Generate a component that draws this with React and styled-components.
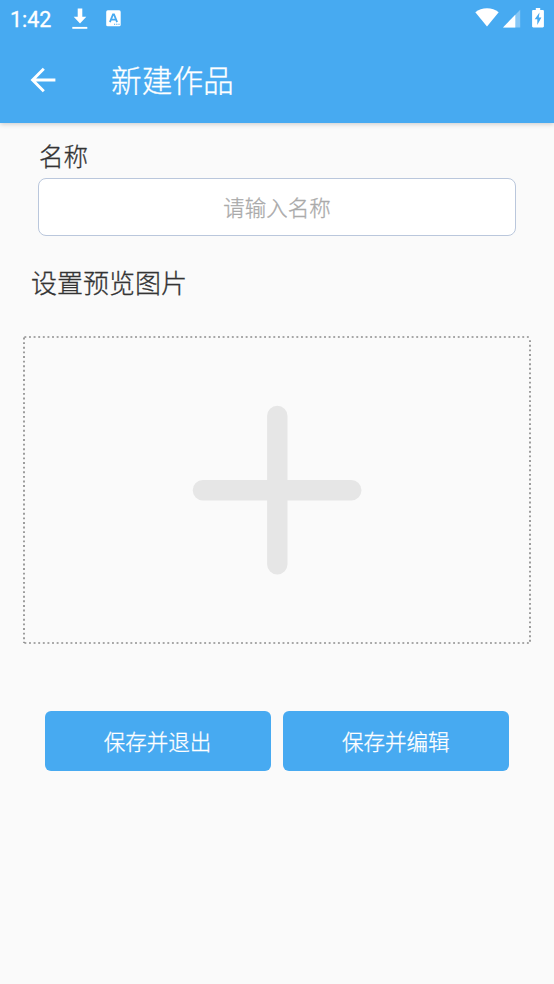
import styled, { createGlobalStyle } from "styled-components";

function App() {
    return (
        <>
            <GlobalStyle />
            <Screen>
                <Header>
                    <StatusBar>
                        <Time>1:42</Time>
                        <DownloadIcon />
                        <InputIcon />
                        <Spacer />
                        <WifiIcon />
                        <SignalIcon />
                        <BatteryIcon />
                    </StatusBar>
                    <Toolbar>
                        <BackButton aria-label="返回">
                            <BackIcon />
                        </BackButton>
                        <Title>新建作品</Title>
                    </Toolbar>
                </Header>
                <Content>
                    <NameLabel htmlFor="name">名称</NameLabel>
                    <NameInput id="name" placeholder="请输入名称" />
                    <PreviewLabel>设置预览图片</PreviewLabel>
                    <PreviewBox>
                        <DottedOutline>
                            <path d="M1.4 1H508M1.4 307H508M1 1.6V307M507 4.2V307" />
                        </DottedOutline>
                        <PlusIcon />
                    </PreviewBox>
                    <Actions>
                        <Button>保存并退出</Button>
                        <Button>保存并编辑</Button>
                    </Actions>
                </Content>
            </Screen>
        </>
    );
}

function DownloadIcon() {
    return (
        <svg width="16" height="22" viewBox="0 0 16 22" fill="#fff">
            <path d="M5.7 0.5h4.6v8.3h4L8 15.4 1.7 8.8h4z" />
            <path d="M0.3 18.9h15v1.9h-15z" />
        </svg>
    );
}

function InputIcon() {
    return (
        <svg width="15" height="17" viewBox="0 0 15 17">
            <rect x="0.2" y="0.3" width="14.5" height="16" rx="1.6" fill="#fff" />
            <path
                d="M3.9 12.1 7 4.4h1l3.1 7.7M5 9.7h5"
                fill="none"
                stroke="#47aaf1"
                strokeWidth="1.8"
            />
            <path d="M8 13.7h1.2v1.1H8zM10.2 13.7h1.2v1.1h-1.2zM12.4 13.7h1.2v1.1h-1.2z" fill="#47aaf1" />
        </svg>
    );
}

function WifiIcon() {
    return (
        <svg width="24" height="19" viewBox="0 0 24 19" fill="#fff">
            <path d="M12 18.5 0.3 4.2C3.5 1.7 7.5 0.3 12 0.3s8.5 1.4 11.7 3.9z" />
        </svg>
    );
}

function SignalIcon() {
    return (
        <svg width="18" height="19" viewBox="0 0 18 19" fill="#fff">
            <path d="M0 18.4 17.2 0.8v17.6z" opacity="0.35" />
            <path d="M0 18.4 12.3 5.8v12.6z" />
        </svg>
    );
}

function BatteryIcon() {
    return (
        <svg width="12" height="20" viewBox="0 0 12 20">
            <path
                d="M3.8 0h4.4v1.9h2.5c.7 0 1.2.5 1.2 1.2v15.2c0 .7-.5 1.2-1.2 1.2H1.3c-.7 0-1.2-.5-1.2-1.2V3.1c0-.7.5-1.2 1.2-1.2h2.5z"
                fill="#fff"
            />
            <path d="M7.5 4.6 2.7 11.3h2.6v5.8L9.4 9.5H6.8z" fill="#47aaf1" />
        </svg>
    );
}

function BackIcon() {
    return (
        <svg width="26" height="26" viewBox="0 0 26 26" fill="none" stroke="#fff" strokeWidth="2.9">
            <path d="M25.4 13H3M13.8 1.8 2.6 13l11.2 11.2" />
        </svg>
    );
}

function PlusIcon() {
    return (
        <svg width="170" height="170" viewBox="0 0 170 170" stroke="#e6e6e6" strokeWidth="20.4" strokeLinecap="round">
            <path d="M85.3 10.9v148.4M10.9 85.3h148.4" fill="none" />
        </svg>
    );
}

const GlobalStyle = createGlobalStyle`
    * {
        box-sizing: border-box;
    }
    body {
        margin: 0;
        background: #fafafa;
        font-family: Roboto, "Noto Sans CJK SC", sans-serif;
        font-weight: 300;
        -webkit-text-stroke: 0.3px currentColor;
    }
    svg {
        display: block;
        flex: none;
    }
    button,
    input {
        font-family: inherit;
        font-weight: inherit;
    }
`;

const Screen = styled.div`
    display: flex;
    flex-direction: column;
    height: 984px;
    overflow: hidden;
    background: #fafafa;
`;

const Header = styled.header`
    height: 123px;
    background: #47aaf1;
    box-shadow: 0 1px 5px rgba(0, 0, 0, 0.2);
`;

const StatusBar = styled.div`
    display: flex;
    align-items: flex-start;
    height: 37px;
    padding: 8px 10px 0;
    svg:nth-of-type(2) {
        margin: 2px 0 0 18px;
    }
    svg:nth-of-type(4) {
        margin: 1px 11px 0 4px;
    }
`;

const Time = styled.span`
    width: 62px;
    font-size: 21.5px;
    font-weight: 400;
    line-height: 24px;
    color: #fff;
`;

const Spacer = styled.div`
    flex: 1;
`;

const Toolbar = styled.div`
    display: flex;
    align-items: center;
    height: 86px;
    padding-left: 30px;
`;

const BackButton = styled.button`
    width: 26px;
    padding: 0;
    border: 0;
    background: none;
`;

const Title = styled.h1`
    margin: 3px 0 0 55px;
    font-size: 30.7px;
    font-weight: 300;
    line-height: 44px;
    color: #fff;
`;

const Content = styled.main`
    display: flex;
    flex-direction: column;
    padding: 17px 23px 0;
`;

const NameLabel = styled.label`
    padding-left: 16px;
    font-size: 24.5px;
    line-height: 36px;
    color: #333;
`;

const NameInput = styled.input`
    height: 58px;
    margin: 2px 15px 0;
    padding: 2px 2px 0;
    border: 1.5px solid #bac7dc;
    border-radius: 8px;
    outline: none;
    background: #fff;
    font-size: 21.5px;
    text-align: center;
    color: #333;
    &::placeholder {
        color: #aaa;
        -webkit-text-stroke: 0.3px #aaa;
    }
`;

const PreviewLabel = styled.p`
    margin: 28px 0 0 8px;
    font-size: 26px;
    line-height: 40px;
    color: #333;
`;

const PreviewBox = styled.div`
    position: relative;
    display: flex;
    align-items: center;
    justify-content: center;
    height: 308px;
    margin-top: 32px;
`;

const DottedOutline = styled.svg`
    position: absolute;
    inset: 0;
    width: 100%;
    height: 100%;
    fill: none;
    stroke: #8c8c8c;
    stroke-width: 1.7;
    stroke-dasharray: 1.9 2.71;
`;

const Actions = styled.div`
    display: flex;
    gap: 12px;
    margin-top: 67px;
    padding: 0 22px 0 21.5px;
`;

const Button = styled.button`
    flex: 1;
    height: 60px;
    padding: 0 0 2px;
    border: 0;
    border-radius: 6px;
    background: #47aaf1;
    font-size: 21.5px;
    color: #fff;
    -webkit-text-stroke: 0.3px #fff;
`;

export default App;
